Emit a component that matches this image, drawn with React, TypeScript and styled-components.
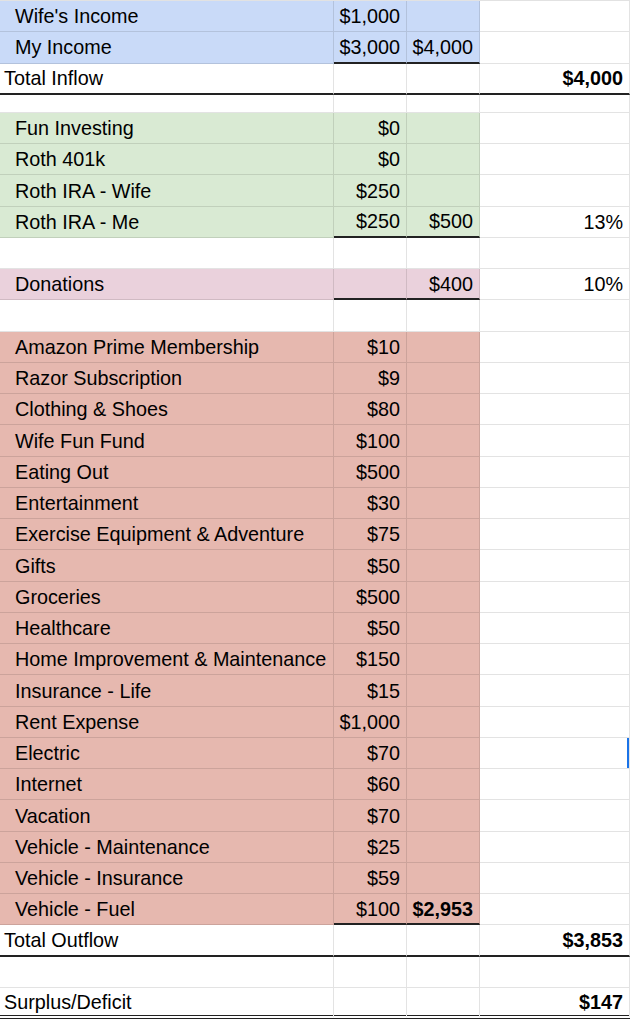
import React from 'react';
import styled, { createGlobalStyle, css } from 'styled-components';

type Tone = 'blue' | 'green' | 'pink' | 'red';

type RowData =
  | {
      kind: 'item';
      tone: Tone;
      label: string;
      c?: string;
      d?: string;
      e?: string;
      bold?: boolean;
      rule?: boolean;
      selected?: boolean;
    }
  | { kind: 'total'; label: string; e: string; line: 'thick' | 'double' }
  | { kind: 'blank'; short?: boolean };

const fills: Record<Tone, string> = {
  blue: '#c9daf8',
  green: '#d9ead3',
  pink: '#ead1dc',
  red: '#e6b8af',
};

const rows: RowData[] = [
  { kind: 'item', tone: 'blue', label: "Wife's Income", c: '$1,000' },
  { kind: 'item', tone: 'blue', label: 'My Income', c: '$3,000', d: '$4,000', rule: true },
  { kind: 'total', label: 'Total Inflow', e: '$4,000', line: 'thick' },
  { kind: 'blank', short: true },
  { kind: 'item', tone: 'green', label: 'Fun Investing', c: '$0' },
  { kind: 'item', tone: 'green', label: 'Roth 401k', c: '$0' },
  { kind: 'item', tone: 'green', label: 'Roth IRA - Wife', c: '$250' },
  { kind: 'item', tone: 'green', label: 'Roth IRA - Me', c: '$250', d: '$500', e: '13%', rule: true },
  { kind: 'blank' },
  { kind: 'item', tone: 'pink', label: 'Donations', d: '$400', e: '10%', rule: true },
  { kind: 'blank' },
  { kind: 'item', tone: 'red', label: 'Amazon Prime Membership', c: '$10' },
  { kind: 'item', tone: 'red', label: 'Razor Subscription', c: '$9' },
  { kind: 'item', tone: 'red', label: 'Clothing & Shoes', c: '$80' },
  { kind: 'item', tone: 'red', label: 'Wife Fun Fund', c: '$100' },
  { kind: 'item', tone: 'red', label: 'Eating Out', c: '$500' },
  { kind: 'item', tone: 'red', label: 'Entertainment', c: '$30' },
  { kind: 'item', tone: 'red', label: 'Exercise Equipment & Adventure', c: '$75' },
  { kind: 'item', tone: 'red', label: 'Gifts', c: '$50' },
  { kind: 'item', tone: 'red', label: 'Groceries', c: '$500' },
  { kind: 'item', tone: 'red', label: 'Healthcare', c: '$50' },
  { kind: 'item', tone: 'red', label: 'Home Improvement & Maintenance', c: '$150' },
  { kind: 'item', tone: 'red', label: 'Insurance - Life', c: '$15' },
  { kind: 'item', tone: 'red', label: 'Rent Expense', c: '$1,000' },
  { kind: 'item', tone: 'red', label: 'Electric', c: '$70', selected: true },
  { kind: 'item', tone: 'red', label: 'Internet', c: '$60' },
  { kind: 'item', tone: 'red', label: 'Vacation', c: '$70' },
  { kind: 'item', tone: 'red', label: 'Vehicle - Maintenance', c: '$25' },
  { kind: 'item', tone: 'red', label: 'Vehicle - Insurance', c: '$59' },
  { kind: 'item', tone: 'red', label: 'Vehicle - Fuel', c: '$100', d: '$2,953', bold: true, rule: true },
  { kind: 'total', label: 'Total Outflow', e: '$3,853', line: 'thick' },
  { kind: 'blank' },
  { kind: 'total', label: 'Surplus/Deficit', e: '$147', line: 'double' },
];

const GlobalStyle = createGlobalStyle`
  html, body {
    margin: 0;
    background: #fff;
  }
  body {
    font-family: "Liberation Sans", Arial, Helvetica, sans-serif;
    color: #000;
  }
`;

const Sheet = styled.div`
  width: 630px;
  overflow: hidden;
  border-top: 1px solid #e2e2e2;
`;

const Row = styled.div<{ $short?: boolean }>`
  display: grid;
  grid-template-columns: 10px 324px 73px 73px 150px;
  height: ${(p) => (p.$short ? '18.2px' : '31.25px')};
`;

const Cell = styled.div<{
  $tone?: Tone;
  $right?: boolean;
  $bold?: boolean;
  $rule?: boolean;
  $selected?: boolean;
  $span?: boolean;
  $line?: 'thick' | 'double';
}>`
  box-sizing: border-box;
  display: flex;
  align-items: center;
  justify-content: ${(p) => (p.$right ? 'flex-end' : 'flex-start')};
  padding: 1px 6px 0 5px;
  font-size: 19.8px;
  font-weight: ${(p) => (p.$bold ? 700 : 400)};
  white-space: nowrap;
  background: ${(p) => (p.$tone ? fills[p.$tone] : '#fff')};
  border-right: 1px solid rgba(0, 0, 0, 0.11);
  border-bottom: 1px solid rgba(0, 0, 0, 0.11);
  ${(p) =>
    p.$span &&
    css`
      grid-column: span 2;
      padding-left: 4px;
    `}
  ${(p) =>
    p.$rule &&
    css`
      border-bottom: 2px solid #222;
    `}
  ${(p) =>
    p.$line === 'thick' &&
    css`
      border-bottom: 2px solid #222;
    `}
  ${(p) =>
    p.$line === 'double' &&
    css`
      border-bottom: 4px double #222;
    `}
  ${(p) =>
    p.$selected &&
    css`
      box-shadow: inset -2px 0 0 #1a73e8;
    `}
`;

const SheetRow: React.FC<{ row: RowData }> = ({ row }) => {
  if (row.kind === 'blank') {
    return (
      <Row $short={row.short}>
        <Cell />
        <Cell />
        <Cell />
        <Cell />
        <Cell />
      </Row>
    );
  }
  if (row.kind === 'total') {
    return (
      <Row>
        <Cell $span $line={row.line}>{row.label}</Cell>
        <Cell $line={row.line} />
        <Cell $line={row.line} />
        <Cell $right $bold $line={row.line}>{row.e}</Cell>
      </Row>
    );
  }
  return (
    <Row>
      <Cell $tone={row.tone} />
      <Cell $tone={row.tone}>{row.label}</Cell>
      <Cell $tone={row.tone} $right $rule={row.rule}>{row.c}</Cell>
      <Cell $tone={row.tone} $right $rule={row.rule} $bold={row.bold}>{row.d}</Cell>
      <Cell $right $selected={row.selected}>{row.e}</Cell>
    </Row>
  );
};

const App: React.FC = () => {
  return (
    <>
      <GlobalStyle />
      <Sheet>
        {rows.map((row, i) => (
          <SheetRow key={i} row={row} />
        ))}
      </Sheet>
    </>
  );
};

export default App;
